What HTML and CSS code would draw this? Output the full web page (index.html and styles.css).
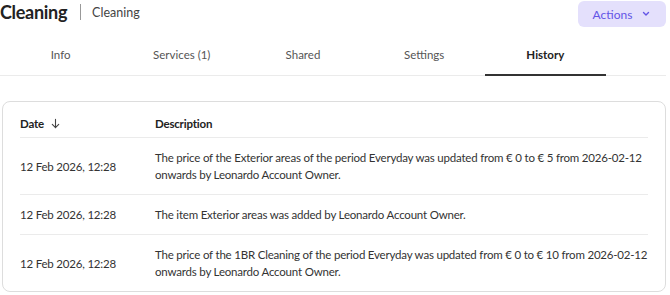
FILE: index.html
```html
<!DOCTYPE html>
<html lang="en">
<head>
    <meta charset="UTF-8">
    <meta name="viewport" content="width=device-width, initial-scale=1.0">
    <title>Cleaning - History</title>
    <link rel="stylesheet" href="styles.css">
</head>
<body>

    <div class="page-header">
        <div class="title-group">
            <h1>Cleaning</h1>
            <span class="divider"></span>
            <span class="subtitle">Cleaning</span>
        </div>
        <button class="actions-btn">
            Actions
            <svg width="10" height="10" viewBox="0 0 10 10"><path d="M2.5 3.5 L5 6 L7.5 3.5" fill="none" stroke="currentColor" stroke-width="1.4" stroke-linecap="round" stroke-linejoin="round"/></svg>
        </button>
    </div>

    <nav class="tabs">
        <a class="tab">Info</a>
        <a class="tab">Services (1)</a>
        <a class="tab">Shared</a>
        <a class="tab">Settings</a>
        <a class="tab active">History</a>
    </nav>

    <!-- History table -->
    <div class="card">
        <table class="history">
            <thead>
                <tr>
                    <th class="date-col">Date
                        <svg class="sort-icon" width="11" height="11" viewBox="0 0 12 12"><path d="M6 1.5 V10.5 M2.5 7 L6 10.5 L9.5 7" fill="none" stroke="currentColor" stroke-width="1.2" stroke-linecap="round" stroke-linejoin="round"/></svg>
                    </th>
                    <th>Description</th>
                </tr>
            </thead>
            <tbody>
                <tr>
                    <td class="date-col">12 Feb 2026, 12:28</td>
                    <td>The price of the Exterior areas of the period Everyday was updated from € 0 to € 5 from <span class="nowrap">2026-02-12</span> onwards by Leonardo Account Owner.</td>
                </tr>
                <tr>
                    <td class="date-col">12 Feb 2026, 12:28</td>
                    <td>The item Exterior areas was added by Leonardo Account Owner.</td>
                </tr>
                <tr>
                    <td class="date-col">12 Feb 2026, 12:28</td>
                    <td>The price of the 1BR Cleaning of the period Everyday was updated from € 0 to € 10 from <span class="nowrap">2026-02-12</span> onwards by Leonardo Account Owner.</td>
                </tr>
            </tbody>
        </table>
    </div>

</body>
</html>
```

FILE: styles.css
```css
body {
    font-family: 'Lato', sans-serif;
    background-color: #fff;
    color: #333;
    margin: 0;
    padding: 0 4px 0 0;
}

.page-header {
    display: flex;
    justify-content: space-between;
    align-items: flex-start;
    padding-top: 1px;
}

.title-group {
    display: flex;
    align-items: center;
    height: 22px;
}

h1 {
    margin: 0;
    font-size: 18px;
    font-weight: 700;
    color: #222;
    letter-spacing: -0.3px;
}

.divider {
    width: 1px;
    height: 16px;
    background-color: #999;
    margin: 0 11px 0 13px;
}

.subtitle {
    font-size: 12.5px;
    color: #444;
}

.actions-btn {
    display: flex;
    align-items: center;
    justify-content: center;
    gap: 9px;
    width: 88px;
    height: 26px;
    padding: 0;
    margin: 0;
    background-color: #e4e0fc;
    color: #6354e6;
    font-family: inherit;
    font-size: 12px;
    border: none;
    border-radius: 6px;
    cursor: pointer;
}

.tabs {
    display: grid;
    grid-template-columns: repeat(5, 121.2px);
    margin-top: 12px;
    border-bottom: 1px solid #ebebeb;
}

.tab {
    text-align: center;
    font-size: 11.5px;
    color: #555;
    padding: 9px 0 13px;
    border-bottom: 2px solid transparent;
    margin-bottom: -1px;
    cursor: pointer;
}

.tab.active {
    font-weight: 700;
    color: #222;
    border-bottom-color: #333;
}

.card {
    margin: 25px 0 0 2px;
    border: 1px solid #ddd;
    border-radius: 8px;
    padding: 7px 17px 0 17px;
}

.history {
    width: 100%;
    border-collapse: collapse;
    font-size: 11.5px;
    letter-spacing: -0.2px;
}

.history th {
    text-align: left;
    font-weight: 700;
    color: #222;
    padding: 6px 0 5px;
    line-height: 17px;
    border-bottom: 1px solid #ebebeb;
}

.history td {
    padding: 11px 0;
    line-height: 17px;
    color: #333;
    vertical-align: middle;
    border-bottom: 1px solid #ebebeb;
}

.history tbody tr:last-child td {
    border-bottom: none;
}

.date-col {
    width: 135px;
}

.nowrap {
    white-space: nowrap;
}

.sort-icon {
    vertical-align: -1px;
    margin-left: 3px;
    color: #444;
}
```
